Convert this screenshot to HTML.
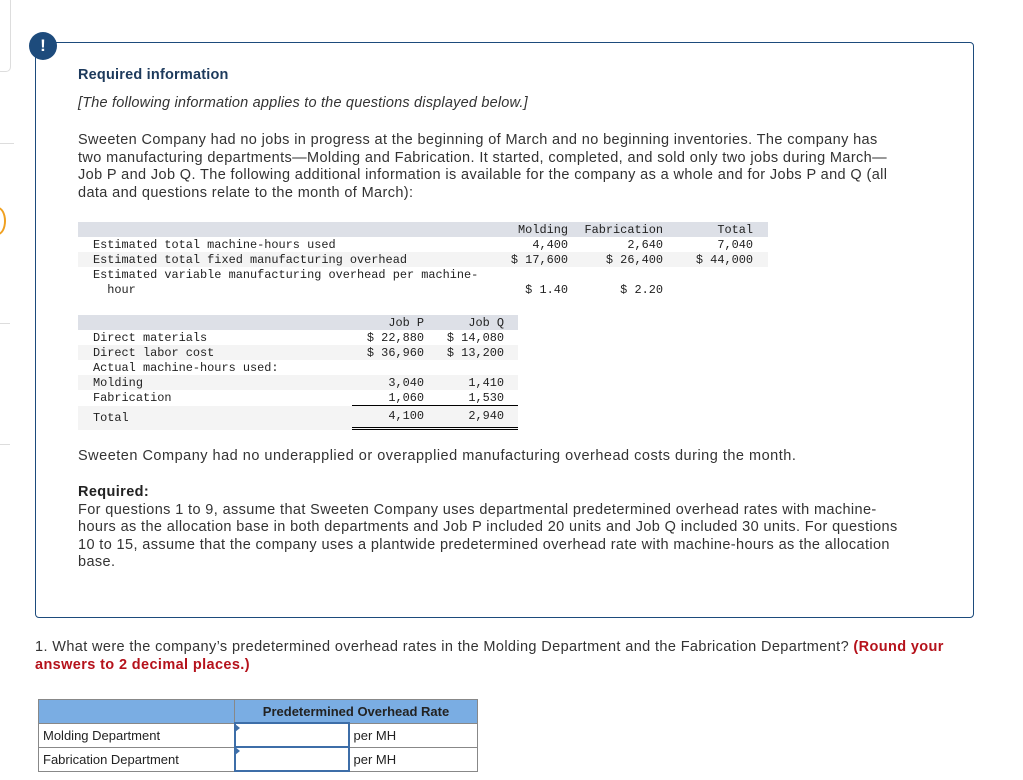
<!DOCTYPE html>
<html><head><meta charset="utf-8"><style>
body{margin:0;width:1023px;height:780px;background:#fff;position:relative;overflow:hidden;font-family:"Liberation Sans",sans-serif;color:#333}
.a{position:absolute}
.box{left:35px;top:42px;width:937px;height:574px;border:1.5px solid #1d4b7c;border-radius:4px}
.ic{left:29px;top:32px;width:28px;height:28px;border-radius:50%;background:#1d4b7c;color:#fff;font-weight:bold;font-size:17px;text-align:center;line-height:28px}
.p{font-size:14.5px;line-height:17.5px;letter-spacing:.38px}
.m{font-family:"Liberation Mono",monospace;font-size:11.9px;color:#222;white-space:pre;line-height:15px}
.r{text-align:right}
.bt{border-collapse:collapse;font-size:13px;color:#222}
.bt td{border:1px solid #888;height:22px;padding:0 4px}
</style></head><body>
<div class="a" style="left:-4px;top:-4px;width:13px;height:74px;border:1px solid #ddd;border-radius:5px"></div>
<div class="a" style="left:0;top:143px;width:14px;height:1px;background:#ddd"></div>
<div class="a" style="left:0;top:323px;width:10px;height:1px;background:#ddd"></div>
<div class="a" style="left:0;top:444px;width:10px;height:1px;background:#ddd"></div>
<div class="a" style="left:-10px;top:207px;width:12px;height:24px;border:2px solid #f0a020;border-radius:50%"></div>
<div class="a box"></div>
<div class="a ic">!</div>
<div class="a" style="left:78px;top:67px;font-size:14.5px;font-weight:bold;color:#1d3a5c;letter-spacing:.2px">Required information</div>
<div class="a p" style="left:78px;top:95px;font-style:italic;letter-spacing:.2px">[The following information applies to the questions displayed below.]</div>
<div class="a p" style="left:78px;top:132px;width:818px">Sweeten Company had no jobs in progress at the beginning of March and no beginning inventories. The company has two manufacturing departments—Molding and Fabrication. It started, completed, and sold only two jobs during March—Job P and Job Q. The following additional information is available for the company as a whole and for Jobs P and Q (all data and questions relate to the month of March):</div>

<div class="a" style="left:78px;top:222px;width:690px;height:15px;background:#dde0e7"></div>
<div class="a" style="left:78px;top:252px;width:690px;height:15px;background:#f4f4f4"></div>
<div class="a m" style="left:93px;top:238px">Estimated total machine-hours used
Estimated total fixed manufacturing overhead
Estimated variable manufacturing overhead per machine-
  hour</div>
<div class="a m r" style="left:470px;top:223px;width:98px">Molding
4,400
$ 17,600

$ 1.40</div>
<div class="a m r" style="left:560px;top:223px;width:103px">Fabrication
2,640
$ 26,400

$ 2.20</div>
<div class="a m r" style="left:670px;top:223px;width:83px">Total
7,040
$ 44,000</div>

<div class="a" style="left:78px;top:315px;width:440px;height:15px;background:#dde0e7"></div>
<div class="a" style="left:78px;top:345px;width:440px;height:15px;background:#f4f4f4"></div>
<div class="a" style="left:78px;top:375px;width:440px;height:15px;background:#f4f4f4"></div>
<div class="a" style="left:78px;top:406px;width:440px;height:24px;background:#f4f4f4"></div>
<div class="a m" style="left:93px;top:331px">Direct materials
Direct labor cost
Actual machine-hours used:
Molding
Fabrication</div>
<div class="a m" style="left:93px;top:411px">Total</div>
<div class="a m r" style="left:330px;top:316px;width:94px">Job P
$ 22,880
$ 36,960

3,040
1,060</div>
<div class="a m r" style="left:420px;top:316px;width:84px">Job Q
$ 14,080
$ 13,200

1,410
1,530</div>
<div class="a m r" style="left:330px;top:409px;width:94px">4,100</div>
<div class="a m r" style="left:420px;top:409px;width:84px">2,940</div>
<div class="a" style="left:352px;top:405px;width:166px;height:1px;background:#000"></div>
<div class="a" style="left:352px;top:427px;width:166px;height:3px;border-top:1px solid #000;border-bottom:1px solid #000;box-sizing:border-box"></div>

<div class="a p" style="left:78px;top:448px;letter-spacing:.5px">Sweeten Company had no underapplied or overapplied manufacturing overhead costs during the month.</div>
<div class="a p" style="left:78px;top:484px;width:822px"><b style="color:#222">Required:</b><br>For questions 1 to 9, assume that Sweeten Company uses departmental predetermined overhead rates with machine-&#8203;hours as the allocation base in both departments and Job P included 20 units and Job Q included 30 units. For questions 10 to 15, assume that the company uses a plantwide predetermined overhead rate with machine-hours as the allocation base.</div>

<div class="a p" style="left:35px;top:639px;width:940px">1. What were the company’s predetermined overhead rates in the Molding Department and the Fabrication Department? <b style="color:#b5121b">(Round your answers to 2 decimal places.)</b></div>

<table class="a bt" style="left:38px;top:699px;width:440px">
<tr style="background:#7aade3"><td style="width:187px"></td><td colspan="2" style="text-align:center;font-weight:bold;color:#222">Predetermined Overhead Rate</td></tr>
<tr><td>Molding Department</td><td style="width:104px;border:2px solid #3d6ea8"></td><td>per MH</td></tr>
<tr><td>Fabrication Department</td><td style="border:2px solid #3d6ea8"></td><td>per MH</td></tr>
</table>
<div class="a" style="left:235px;top:724px;width:0;height:0;border-top:4px solid transparent;border-bottom:4px solid transparent;border-left:5px solid #3d6ea8"></div>
<div class="a" style="left:235px;top:747px;width:0;height:0;border-top:4px solid transparent;border-bottom:4px solid transparent;border-left:5px solid #3d6ea8"></div>
</body></html>
